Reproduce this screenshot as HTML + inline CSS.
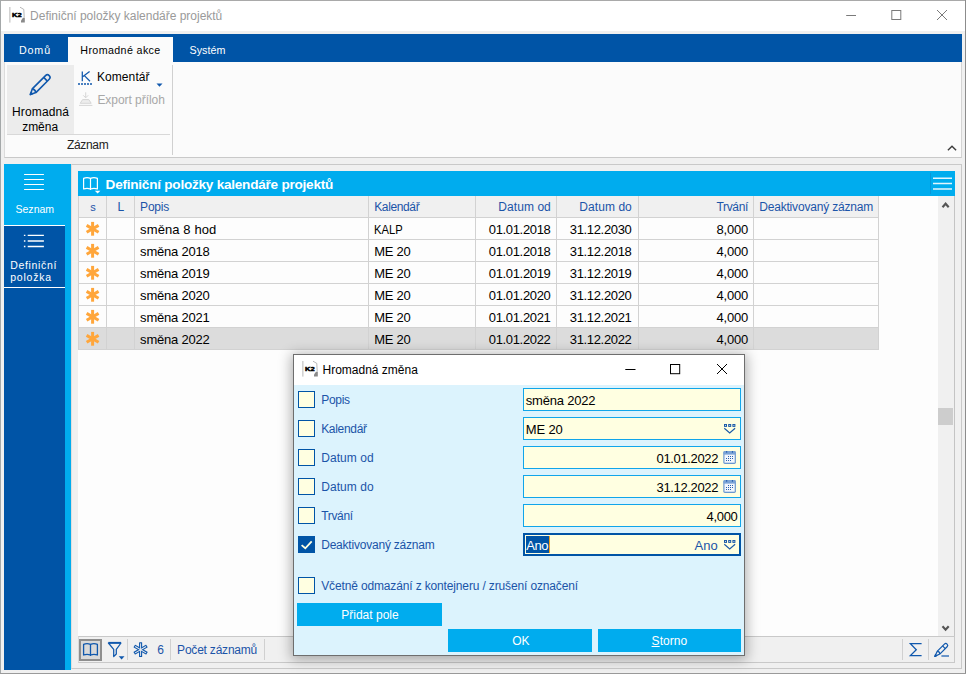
<!DOCTYPE html>
<html><head><meta charset="utf-8"><title>K2</title>
<style>
html,body{margin:0;padding:0}
body{width:966px;height:674px;position:relative;overflow:hidden;background:#f0f0f0;font-family:"Liberation Sans",sans-serif;font-size:12px}
.a{position:absolute}
.t{position:absolute;white-space:pre;line-height:16px;height:16px;font-family:"Liberation Sans",sans-serif}
.cb{position:absolute;width:15px;height:15px;border:1px solid #0054a6;background:#ffffe1;left:298px;z-index:30}
.fld{position:absolute;left:523px;width:216px;height:21px;border:1px solid #10a5ea;background:#ffffe1;z-index:30}
.btn{position:absolute;background:#00acee;z-index:30}
.gl{position:absolute;background:#d2d2d2}
svg{position:absolute;overflow:visible}
</style></head><body>
<!-- window frame -->
<div class="a" style="left:0;top:0;width:966px;height:1px;background:#a9a9a9"></div>
<div class="a" style="left:0;top:0;width:1px;height:674px;background:#a4a8a9"></div>
<div class="a" style="left:965px;top:0;width:1px;height:674px;background:#8c8c8c"></div>
<div class="a" style="left:0;top:673px;width:966px;height:1px;background:#9a9a9a"></div>
<!-- title bar -->
<div class="a" style="left:1px;top:1px;width:964px;height:30px;background:#fff"></div>
<!-- ribbon tabs -->
<div class="a" style="left:4px;top:34px;width:958px;height:28px;background:#0054a6"></div>
<div class="a" style="left:68px;top:37px;width:105px;height:25px;background:#fbfbfb"></div>
<!-- ribbon body -->
<div class="a" style="left:4px;top:62px;width:958px;height:96px;background:#fbfbfb;border-bottom:1px solid #c9c9c9;border-left:1px solid #dcdcdc;border-right:1px solid #d4d4d4;box-sizing:border-box"></div>
<div class="a" style="left:7px;top:65px;width:67px;height:69px;background:#ececec"></div>
<div class="a" style="left:7px;top:134px;width:163px;height:1px;background:#d8d8d8"></div>
<div class="a" style="left:172px;top:65px;width:1px;height:90px;background:#d0d0d0"></div>
<!-- sidebar -->
<div class="a" style="left:4px;top:164px;width:67px;height:506px;background:#00acee"></div>
<div class="a" style="left:4px;top:226px;width:61px;height:444px;background:#0054a6"></div>
<div class="a" style="left:4px;top:225px;width:61px;height:1px;background:#fff"></div>
<div class="a" style="left:4px;top:287px;width:61px;height:1px;background:#fff"></div>
<!-- main panel -->
<div class="a" style="left:71px;top:164px;width:891px;height:505px;border:1px solid #c9c9c9;border-left-color:#dedede;box-sizing:border-box;background:#f0f0f0"></div>
<div class="a" style="left:78px;top:171px;width:877px;height:25px;background:#00acee"></div>
<!-- grid area -->
<div class="a" style="left:78px;top:196px;width:860px;height:440px;background:#fdfdfd"></div>
<div class="a" style="left:938px;top:196px;width:16px;height:440px;background:#f0f0f0"></div>
<div class="a" style="left:938px;top:408px;width:15px;height:17px;background:#cdcdcd"></div>
<div class="a" style="left:954px;top:196px;width:1px;height:467px;background:#c4c4c4"></div>
<!-- column header -->
<div class="a" style="left:78px;top:196px;width:800px;height:21px;background:#f0f0f0"></div>
<!-- selected row -->
<div class="a" style="left:78px;top:328px;width:800px;height:21px;background:#dcdcdc"></div>
<!-- grid lines -->
<div class="gl" style="left:78px;top:217px;width:801px;height:1px"></div>
<div class="gl" style="left:78px;top:239px;width:801px;height:1px"></div>
<div class="gl" style="left:78px;top:261px;width:801px;height:1px"></div>
<div class="gl" style="left:78px;top:283px;width:801px;height:1px"></div>
<div class="gl" style="left:78px;top:305px;width:801px;height:1px"></div>
<div class="gl" style="left:78px;top:327px;width:801px;height:1px"></div>
<div class="gl" style="left:78px;top:349px;width:801px;height:1px"></div>
<div class="gl" style="left:78px;top:196px;width:1px;height:154px"></div>
<div class="gl" style="left:106px;top:196px;width:1px;height:154px"></div>
<div class="gl" style="left:134px;top:196px;width:1px;height:154px"></div>
<div class="gl" style="left:368px;top:196px;width:1px;height:154px"></div>
<div class="gl" style="left:475px;top:196px;width:1px;height:154px"></div>
<div class="gl" style="left:556px;top:196px;width:1px;height:154px"></div>
<div class="gl" style="left:638px;top:196px;width:1px;height:154px"></div>
<div class="gl" style="left:753px;top:196px;width:1px;height:154px"></div>
<div class="gl" style="left:878px;top:196px;width:1px;height:154px"></div>
<!-- status bar -->
<div class="a" style="left:78px;top:636px;width:877px;height:27px;background:#f0f0f0;border-top:1px solid #c9c9c9;border-bottom:1px solid #c9c9c9;border-right:1px solid #c9c9c9;border-left:1px solid #dadada;box-sizing:border-box"></div>
<div class="a" style="left:79px;top:639px;width:23px;height:22px;background:#d9d9d9;border:2px solid #8e8e8e;box-sizing:border-box"></div>
<div class="a" style="left:127px;top:639px;width:1px;height:21px;background:#d0d0d0"></div>
<div class="a" style="left:170px;top:639px;width:1px;height:21px;background:#d0d0d0"></div>
<div class="a" style="left:264px;top:639px;width:1px;height:21px;background:#d0d0d0"></div>
<div class="a" style="left:902px;top:639px;width:1px;height:21px;background:#d0d0d0"></div>
<div class="a" style="left:928px;top:639px;width:1px;height:21px;background:#d0d0d0"></div>
<svg style="left:9.2px;top:7.3px;" width="17" height="16" viewBox="0 0 17 16"><rect x="0" y="0" width="1.6" height="15.6" fill="#d2d2d2"/><text x="3" y="9.9" font-family="Liberation Sans, sans-serif" font-weight="bold" font-size="6.2" fill="#000" stroke="#000" stroke-width="0.5" textLength="9.6" lengthAdjust="spacingAndGlyphs">K2</text><path d="M11,0.2 L14.8,2.4 L15.2,10.5" fill="none" stroke="#9a9a9a" stroke-width="0.7"/><path d="M12,15.6 L12,13.5 L14,10.8 L15.8,10.8 L15.8,15.6 Z" fill="#8a8a8a"/></svg>
<svg style="left:840px;top:5px;" width="120" height="22" viewBox="0 0 120 22"><path d="M6.2,10.5 H16" stroke="#7a7a7a" stroke-width="1" fill="none"/><rect x="51.8" y="5.5" width="9" height="9" stroke="#7a7a7a" stroke-width="1" fill="none"/><path d="M97,5 L107,15 M107,5 L97,15" stroke="#7a7a7a" stroke-width="1" fill="none"/></svg>
<svg style="left:942px;top:140px;" width="20" height="14" viewBox="0 0 20 14"><path d="M5.9,10.3 L10,6.3 L14.1,10.3" stroke="#3c3c3c" stroke-width="1.4" fill="none"/></svg>
<svg style="left:0;top:0;" width="966" height="674"><g transform="translate(30.4,94.4) rotate(-45)" fill="none" stroke="#1058ad" stroke-width="1.6" stroke-linejoin="round"><path d="M0,0 L5.2,-2.6 L24,-2.6 A2.6,2.6 0 0 1 24,2.6 L5.2,2.6 Z"/><path d="M5.2,-2.6 Q7,0 5.2,2.6"/><path d="M21.4,-2.6 L21.4,2.6"/><path d="M0,0 L1.8,-0.8 L1.8,0.8 Z" fill="#1058ad"/></g></svg>
<svg style="left:76px;top:68px;" width="20" height="20" viewBox="0 0 20 20"><path d="M6.3,3.6 V13.3 M6.3,9 L13.6,3.6 M8.4,7.6 L14,13.3" stroke="#1058ad" stroke-width="1.25" fill="none"/><path d="M2,16 H17" stroke="#1058ad" stroke-width="1.3" stroke-dasharray="2 1" fill="none"/></svg>
<svg style="left:155px;top:82px;" width="10" height="6" viewBox="0 0 10 6"><path d="M1.5,1.4 L7.5,1.4 L4.5,4.7 Z" fill="#1058ad"/></svg>
<svg style="left:78px;top:91px;" width="16" height="16" viewBox="0 0 16 16"><path d="M7.7,1.3 V6.6 M5.2,4.3 L7.7,6.8 L10.2,4.3" stroke="#d6d6d6" stroke-width="1" fill="none"/><path d="M2.2,12.3 L4.6,8.6 H10.8 L13.2,12.3 Z" stroke="#d6d6d6" stroke-width="1" fill="#ededed"/><path d="M1,14.4 H14.4" stroke="#d6d6d6" stroke-width="1" fill="none"/></svg>
<svg style="left:20px;top:170px;" width="30" height="24" viewBox="0 0 30 24"><path d="M4.1,4.5 H23.9 M4.1,9.5 H23.9 M4.1,14.5 H23.9 M4.1,19.5 H23.9" stroke="#fff" stroke-width="1.05" fill="none"/></svg>
<svg style="left:20px;top:231px;" width="30" height="20" viewBox="0 0 30 20"><path d="M7.7,4.4 H23.9 M7.7,10 H23.9 M7.7,15.5 H23.9" stroke="#fff" stroke-width="1.3" fill="none"/><path d="M3.9,4.4 H5.4 M3.9,10 H5.4 M3.9,15.5 H5.4" stroke="#fff" stroke-width="1.3" fill="none"/></svg>
<svg style="left:83px;top:177px;" width="16" height="15" viewBox="0 0 16 15"><path d="M0.6,1.4 Q4,-0.2 7.5,1.4 Q11,-0.2 14.4,1.4 V12 Q11,10.6 7.5,12 Q4,10.6 0.6,12 Z M7.5,1.4 V13" stroke="#fff" stroke-width="1.2" fill="none" stroke-linejoin="round"/></svg>
<svg style="left:94px;top:190px;" width="8" height="5" viewBox="0 0 8 5"><path d="M0.8,0.7 H6.4 L3.6,3.6 Z" fill="#fff"/></svg>
<svg style="left:928px;top:172px;" width="28" height="23" viewBox="0 0 28 23"><path d="M2.5,1 V22" stroke="#0a97d8" stroke-width="1"/><path d="M5,6.3 H24 M5,11.6 H24 M5,16.9 H24" stroke="#e4f5fd" stroke-width="1.5" fill="none"/></svg>
<svg style="left:0;top:0" width="966" height="674"><g transform="translate(92.6,228.8)" stroke="#ffa63b" stroke-width="3" fill="none"><path d="M0,-6.9 V6.9"/><path d="M0,-6.9 V6.9" transform="rotate(60)"/><path d="M0,-6.9 V6.9" transform="rotate(120)"/></g><g transform="translate(92.6,250.8)" stroke="#ffa63b" stroke-width="3" fill="none"><path d="M0,-6.9 V6.9"/><path d="M0,-6.9 V6.9" transform="rotate(60)"/><path d="M0,-6.9 V6.9" transform="rotate(120)"/></g><g transform="translate(92.6,272.8)" stroke="#ffa63b" stroke-width="3" fill="none"><path d="M0,-6.9 V6.9"/><path d="M0,-6.9 V6.9" transform="rotate(60)"/><path d="M0,-6.9 V6.9" transform="rotate(120)"/></g><g transform="translate(92.6,294.8)" stroke="#ffa63b" stroke-width="3" fill="none"><path d="M0,-6.9 V6.9"/><path d="M0,-6.9 V6.9" transform="rotate(60)"/><path d="M0,-6.9 V6.9" transform="rotate(120)"/></g><g transform="translate(92.6,316.8)" stroke="#ffa63b" stroke-width="3" fill="none"><path d="M0,-6.9 V6.9"/><path d="M0,-6.9 V6.9" transform="rotate(60)"/><path d="M0,-6.9 V6.9" transform="rotate(120)"/></g><g transform="translate(92.6,338.8)" stroke="#ffa63b" stroke-width="3" fill="none"><path d="M0,-6.9 V6.9"/><path d="M0,-6.9 V6.9" transform="rotate(60)"/><path d="M0,-6.9 V6.9" transform="rotate(120)"/></g></svg>
<svg style="left:0;top:0" width="966" height="674"><path d="M942.5,207.2 L945.6,203.7 L948.7,207.2" stroke="#555" stroke-width="2.1" fill="none"/><path d="M942.5,626.2 L945.6,629.7 L948.7,626.2" stroke="#555" stroke-width="2.1" fill="none"/></svg>
<svg style="left:83px;top:643px;" width="16" height="15" viewBox="0 0 16 15"><path d="M0.6,1.4 Q4,-0.2 7.5,1.4 Q11,-0.2 14.4,1.4 V12 Q11,10.6 7.5,12 Q4,10.6 0.6,12 Z M7.5,1.4 V13" stroke="#1058ad" stroke-width="1.3" fill="none" stroke-linejoin="round"/></svg>
<svg style="left:106px;top:640px;" width="22" height="22" viewBox="0 0 22 22"><path d="M2.4,3 H15 L10.3,9.3 V14 L7.7,16.6 V9.3 Z" stroke="#1058ad" stroke-width="1.25" fill="none" stroke-linejoin="round"/><path d="M2.4,2.7 H15" stroke="#1058ad" stroke-width="1.6" fill="none"/><path d="M12.7,16.2 H18.5 L15.6,19.5 Z" fill="#1058ad"/></svg>
<svg style="left:0;top:0" width="966" height="674"><g transform="translate(140.6,649.65)"><g transform="rotate(0)" fill="#1058ad"><rect x="-1.55" y="-7.3" width="3.1" height="14.6" rx="0.3"/></g><g transform="rotate(60)" fill="#1058ad"><rect x="-1.55" y="-7.3" width="3.1" height="14.6" rx="0.3"/></g><g transform="rotate(120)" fill="#1058ad"><rect x="-1.55" y="-7.3" width="3.1" height="14.6" rx="0.3"/></g><g transform="rotate(0)" fill="#f0f0f0"><rect x="-0.45" y="-6.3" width="0.9" height="12.6"/></g><g transform="rotate(60)" fill="#f0f0f0"><rect x="-0.45" y="-6.3" width="0.9" height="12.6"/></g><g transform="rotate(120)" fill="#f0f0f0"><rect x="-0.45" y="-6.3" width="0.9" height="12.6"/></g></g></svg>
<svg style="left:905px;top:640px;" width="22" height="20" viewBox="0 0 22 20"><path d="M16.6,3.7 H5.4 L11.3,9.7 L5.4,15.6 H16.6" stroke="#1058ad" stroke-width="1.3" fill="none" stroke-linejoin="miter"/></svg>
<svg style="left:0;top:0;" width="966" height="674"><g transform="translate(934.8,656.4) rotate(-45)" fill="none" stroke="#1058ad" stroke-width="1.2" stroke-linejoin="round"><path d="M0,0 L5.2,-1.9 L15.5,-1.9 A1.9,1.9 0 0 1 15.5,1.9 L5.2,1.9 Z"/><path d="M5.2,-1.9 Q7,0 5.2,1.9"/><path d="M12.9,-1.9 L12.9,1.9"/><path d="M0,0 L1.8,-0.8 L1.8,0.8 Z" fill="#1058ad"/></g></svg>
<svg style="left:938px;top:654px;" width="14" height="4" viewBox="0 0 14 4"><path d="M3.4,2 H11" stroke="#1058ad" stroke-width="1.2"/></svg>
<!-- dialog -->
<div class="a" style="left:293px;top:354px;width:452px;height:302px;border:1px solid #6e6e6e;box-sizing:border-box;background:#dcf3fd;box-shadow:0 2px 12px 2px rgba(0,0,0,.30);z-index:20"></div>
<div class="a" style="left:294px;top:355px;width:450px;height:30px;background:#fff;z-index:21"></div>
<div class="cb" style="top:391px"></div>
<div class="cb" style="top:420px"></div>
<div class="cb" style="top:449px"></div>
<div class="cb" style="top:478px"></div>
<div class="cb" style="top:507px"></div>
<div class="cb" style="top:536px;background:#0054a6"></div>
<div class="cb" style="top:577px"></div>
<div class="fld" style="top:388px"></div>
<div class="fld" style="top:417px"></div>
<div class="fld" style="top:446px"></div>
<div class="fld" style="top:475px"></div>
<div class="fld" style="top:504px"></div>
<div class="fld" style="top:533px;border:2px solid #0054a6;width:214px;height:19px"></div>
<div class="a" style="left:525.5px;top:536px;width:24px;height:17px;background:#0054a6;z-index:30"></div>
<div class="a" style="left:549px;top:536px;width:1px;height:17px;background:#f5a11c;z-index:30"></div>
<div class="btn" style="left:297px;top:603px;width:145px;height:23px"></div>
<div class="btn" style="left:448px;top:629px;width:144px;height:23px"></div>
<div class="btn" style="left:598px;top:629px;width:143px;height:23px"></div>
<svg style="left:302.2px;top:361.2px;z-index:30;" width="17" height="16" viewBox="0 0 17 16"><rect x="0" y="0" width="1.6" height="15.6" fill="#d2d2d2"/><text x="3" y="9.9" font-family="Liberation Sans, sans-serif" font-weight="bold" font-size="6.2" fill="#000" stroke="#000" stroke-width="0.5" textLength="9.6" lengthAdjust="spacingAndGlyphs">K2</text><path d="M11,0.2 L14.8,2.4 L15.2,10.5" fill="none" stroke="#9a9a9a" stroke-width="0.7"/><path d="M12,15.6 L12,13.5 L14,10.8 L15.8,10.8 L15.8,15.6 Z" fill="#8a8a8a"/></svg>
<svg style="left:620px;top:358px;z-index:30;" width="120" height="22" viewBox="0 0 120 22"><path d="M5.3,11.5 H15.5" stroke="#000" stroke-width="1" fill="none"/><rect x="50.5" y="6.5" width="9.2" height="9.2" stroke="#000" stroke-width="1" fill="none"/><path d="M97,6 L107,16 M107,6 L97,16" stroke="#000" stroke-width="1" fill="none"/></svg>
<svg style="left:724px;top:424px;z-index:30;" width="13" height="10" viewBox="0 0 13 10"><rect x="0.0" y="0" width="3" height="2.9" fill="#1c5aa6"/><rect x="1.0" y="0.95" width="1" height="1" fill="#c9dcf3"/><rect x="4.2" y="0" width="3" height="2.9" fill="#1c5aa6"/><rect x="5.2" y="0.95" width="1" height="1" fill="#c9dcf3"/><rect x="8.4" y="0" width="3" height="2.9" fill="#1c5aa6"/><rect x="9.4" y="0.95" width="1" height="1" fill="#c9dcf3"/><path d="M0.3,4.2 L5.7,8.9 L11.1,4.2" stroke="#1c5aa6" stroke-width="1.15" fill="none"/></svg>
<svg style="left:724px;top:540px;z-index:30;" width="13" height="10" viewBox="0 0 13 10"><rect x="0.0" y="0" width="3" height="2.9" fill="#1c5aa6"/><rect x="1.0" y="0.95" width="1" height="1" fill="#c9dcf3"/><rect x="4.2" y="0" width="3" height="2.9" fill="#1c5aa6"/><rect x="5.2" y="0.95" width="1" height="1" fill="#c9dcf3"/><rect x="8.4" y="0" width="3" height="2.9" fill="#1c5aa6"/><rect x="9.4" y="0.95" width="1" height="1" fill="#c9dcf3"/><path d="M0.3,4.2 L5.7,8.9 L11.1,4.2" stroke="#1c5aa6" stroke-width="1.15" fill="none"/></svg>
<svg style="left:723px;top:451px;z-index:30;" width="14" height="14" viewBox="0 0 14 14"><rect x="0.3" y="0.1" width="12.6" height="12.8" rx="1.6" fill="#6a97cf"/><rect x="0.3" y="0.1" width="12.6" height="3.6" rx="1.6" fill="#7ba3d6"/><rect x="1.5" y="3.6" width="10.2" height="8.1" fill="#f3f6fc"/><rect x="3.1" y="0" width="1.1" height="1.7" fill="#2a62b0"/><rect x="8.9" y="0" width="1.1" height="1.7" fill="#2a62b0"/><rect x="5" y="5" width="1" height="1" fill="#2a62b0"/><rect x="7" y="5" width="1" height="1" fill="#2a62b0"/><rect x="9" y="5" width="1" height="1" fill="#2a62b0"/><rect x="3" y="7" width="1" height="1" fill="#2a62b0"/><rect x="5" y="7" width="1" height="1" fill="#2a62b0"/><rect x="7" y="7" width="1" height="1" fill="#2a62b0"/><rect x="9" y="7" width="1" height="1" fill="#2a62b0"/><rect x="3" y="9" width="1" height="1" fill="#2a62b0"/><rect x="5" y="9" width="1" height="1" fill="#2a62b0"/><rect x="7" y="9" width="1" height="1" fill="#2a62b0"/></svg>
<svg style="left:723px;top:480px;z-index:30;" width="14" height="14" viewBox="0 0 14 14"><rect x="0.3" y="0.1" width="12.6" height="12.8" rx="1.6" fill="#6a97cf"/><rect x="0.3" y="0.1" width="12.6" height="3.6" rx="1.6" fill="#7ba3d6"/><rect x="1.5" y="3.6" width="10.2" height="8.1" fill="#f3f6fc"/><rect x="3.1" y="0" width="1.1" height="1.7" fill="#2a62b0"/><rect x="8.9" y="0" width="1.1" height="1.7" fill="#2a62b0"/><rect x="5" y="5" width="1" height="1" fill="#2a62b0"/><rect x="7" y="5" width="1" height="1" fill="#2a62b0"/><rect x="9" y="5" width="1" height="1" fill="#2a62b0"/><rect x="3" y="7" width="1" height="1" fill="#2a62b0"/><rect x="5" y="7" width="1" height="1" fill="#2a62b0"/><rect x="7" y="7" width="1" height="1" fill="#2a62b0"/><rect x="9" y="7" width="1" height="1" fill="#2a62b0"/><rect x="3" y="9" width="1" height="1" fill="#2a62b0"/><rect x="5" y="9" width="1" height="1" fill="#2a62b0"/><rect x="7" y="9" width="1" height="1" fill="#2a62b0"/></svg>
<svg style="left:298px;top:536px;z-index:30;" width="17" height="17" viewBox="0 0 17 17"><path d="M3.6,9.1 L7.3,12.3 L13.7,5.3" stroke="#ffffe1" stroke-width="1.8" fill="none"/></svg>
<span class="t" style="left:30.10px;top:8px;font-size:12px;color:#9a9a9a;letter-spacing:-0.017px;">Definiční položky kalendáře projektů</span>
<span class="t" style="left:18.90px;top:42px;font-size:10.7px;color:#fff;letter-spacing:0.895px;">Domů</span>
<span class="t" style="left:80.30px;top:42px;font-size:10.7px;color:#000;letter-spacing:0.379px;">Hromadné akce</span>
<span class="t" style="left:189.60px;top:42px;font-size:10.7px;color:#fff;letter-spacing:0.012px;">Systém</span>
<span class="t" style="left:96.90px;top:69px;font-size:12px;color:#000;letter-spacing:0.096px;">Komentář</span>
<span class="t" style="left:97.40px;top:92px;font-size:12px;color:#a8a8a8;letter-spacing:-0.046px;">Export příloh</span>
<span class="t" style="left:12.00px;top:104px;font-size:12px;color:#000;letter-spacing:0.138px;">Hromadná</span>
<span class="t" style="left:22.20px;top:119px;font-size:12px;color:#000;letter-spacing:-0.033px;">změna</span>
<span class="t" style="left:67.00px;top:137px;font-size:12px;color:#222;letter-spacing:-0.332px;">Záznam</span>
<span class="t" style="left:15.50px;top:201px;font-size:10.5px;color:#fff;letter-spacing:0.014px;">Seznam</span>
<span class="t" style="left:10.20px;top:257px;font-size:10.5px;color:#fff;letter-spacing:0.680px;">Definiční</span>
<span class="t" style="left:10.20px;top:269px;font-size:10.5px;color:#fff;letter-spacing:0.799px;">položka</span>
<span class="t" style="left:105.60px;top:177px;font-size:13.6px;color:#fff;font-weight:bold;letter-spacing:-0.250px;">Definiční položky kalendáře projektů</span>
<span class="t" style="left:90.20px;top:199px;font-size:11px;color:#1b54a8;">s</span>
<span class="t" style="left:117.60px;top:199px;font-size:12px;color:#1b54a8;">L</span>
<span class="t" style="left:140.10px;top:199px;font-size:12px;color:#1b54a8;letter-spacing:-0.208px;">Popis</span>
<span class="t" style="left:374.20px;top:199px;font-size:12px;color:#1b54a8;letter-spacing:-0.364px;">Kalendář</span>
<span class="t" style="left:498.30px;top:199px;font-size:12px;color:#1b54a8;letter-spacing:0.067px;">Datum od</span>
<span class="t" style="left:579.30px;top:199px;font-size:12px;color:#1b54a8;letter-spacing:0.067px;">Datum do</span>
<span class="t" style="left:716.60px;top:199px;font-size:12px;color:#1b54a8;letter-spacing:-0.373px;">Trvání</span>
<span class="t" style="left:759.20px;top:199px;font-size:12px;color:#1b54a8;letter-spacing:-0.183px;">Deaktivovaný záznam</span>
<span class="t" style="left:140.10px;top:222px;font-size:13px;color:#000;letter-spacing:0.103px;">směna 8 hod</span>
<span class="t" style="left:374.20px;top:222px;font-size:13px;color:#000;transform:scaleX(0.8602);transform-origin:0 50%;">KALP</span>
<span class="t" style="left:488.80px;top:222px;font-size:13px;color:#000;letter-spacing:-0.342px;">01.01.2018</span>
<span class="t" style="left:569.80px;top:222px;font-size:13px;color:#000;letter-spacing:-0.342px;">31.12.2030</span>
<span class="t" style="left:716.60px;top:222px;font-size:13px;color:#000;letter-spacing:-0.212px;">8,000</span>
<span class="t" style="left:140.10px;top:244px;font-size:13px;color:#000;letter-spacing:-0.207px;">směna 2018</span>
<span class="t" style="left:374.20px;top:244px;font-size:13px;color:#000;letter-spacing:-0.245px;">ME 20</span>
<span class="t" style="left:488.80px;top:244px;font-size:13px;color:#000;letter-spacing:-0.342px;">01.01.2018</span>
<span class="t" style="left:569.80px;top:244px;font-size:13px;color:#000;letter-spacing:-0.342px;">31.12.2018</span>
<span class="t" style="left:716.60px;top:244px;font-size:13px;color:#000;letter-spacing:-0.212px;">4,000</span>
<span class="t" style="left:140.10px;top:266px;font-size:13px;color:#000;letter-spacing:-0.207px;">směna 2019</span>
<span class="t" style="left:374.20px;top:266px;font-size:13px;color:#000;letter-spacing:-0.245px;">ME 20</span>
<span class="t" style="left:488.80px;top:266px;font-size:13px;color:#000;letter-spacing:-0.342px;">01.01.2019</span>
<span class="t" style="left:569.80px;top:266px;font-size:13px;color:#000;letter-spacing:-0.342px;">31.12.2019</span>
<span class="t" style="left:716.60px;top:266px;font-size:13px;color:#000;letter-spacing:-0.212px;">4,000</span>
<span class="t" style="left:140.10px;top:288px;font-size:13px;color:#000;letter-spacing:-0.207px;">směna 2020</span>
<span class="t" style="left:374.20px;top:288px;font-size:13px;color:#000;letter-spacing:-0.245px;">ME 20</span>
<span class="t" style="left:488.80px;top:288px;font-size:13px;color:#000;letter-spacing:-0.342px;">01.01.2020</span>
<span class="t" style="left:569.80px;top:288px;font-size:13px;color:#000;letter-spacing:-0.342px;">31.12.2020</span>
<span class="t" style="left:716.60px;top:288px;font-size:13px;color:#000;letter-spacing:-0.212px;">4,000</span>
<span class="t" style="left:140.10px;top:310px;font-size:13px;color:#000;letter-spacing:-0.207px;">směna 2021</span>
<span class="t" style="left:374.20px;top:310px;font-size:13px;color:#000;letter-spacing:-0.245px;">ME 20</span>
<span class="t" style="left:488.80px;top:310px;font-size:13px;color:#000;letter-spacing:-0.342px;">01.01.2021</span>
<span class="t" style="left:569.80px;top:310px;font-size:13px;color:#000;letter-spacing:-0.342px;">31.12.2021</span>
<span class="t" style="left:716.60px;top:310px;font-size:13px;color:#000;letter-spacing:-0.212px;">4,000</span>
<span class="t" style="left:140.10px;top:332px;font-size:13px;color:#000;letter-spacing:-0.207px;">směna 2022</span>
<span class="t" style="left:374.20px;top:332px;font-size:13px;color:#000;letter-spacing:-0.245px;">ME 20</span>
<span class="t" style="left:488.80px;top:332px;font-size:13px;color:#000;letter-spacing:-0.342px;">01.01.2022</span>
<span class="t" style="left:569.80px;top:332px;font-size:13px;color:#000;letter-spacing:-0.342px;">31.12.2022</span>
<span class="t" style="left:716.60px;top:332px;font-size:13px;color:#000;letter-spacing:-0.212px;">4,000</span>
<span class="t" style="left:157.20px;top:642px;font-size:12px;color:#1b54a8;">6</span>
<span class="t" style="left:177.10px;top:642px;font-size:12px;color:#1b54a8;letter-spacing:-0.210px;">Počet záznamů</span>
<span class="t" style="left:322.50px;top:362px;font-size:12px;color:#000;z-index:30;">Hromadná změna</span>
<span class="t" style="left:321.20px;top:392px;font-size:12px;color:#1b54a8;letter-spacing:-0.283px;z-index:30;">Popis</span>
<span class="t" style="left:321.20px;top:421px;font-size:12px;color:#1b54a8;letter-spacing:-0.321px;z-index:30;">Kalendář</span>
<span class="t" style="left:321.20px;top:450px;font-size:12px;color:#1b54a8;letter-spacing:0.081px;z-index:30;">Datum od</span>
<span class="t" style="left:321.20px;top:479px;font-size:12px;color:#1b54a8;letter-spacing:0.081px;z-index:30;">Datum do</span>
<span class="t" style="left:321.20px;top:508px;font-size:12px;color:#1b54a8;letter-spacing:-0.333px;z-index:30;">Trvání</span>
<span class="t" style="left:321.20px;top:537px;font-size:12px;color:#1b54a8;letter-spacing:-0.211px;z-index:30;">Deaktivovaný záznam</span>
<span class="t" style="left:321.20px;top:578px;font-size:12px;color:#1b54a8;letter-spacing:-0.143px;z-index:30;">Včetně odmazání z kontejneru / zrušení označení</span>
<span class="t" style="left:525.80px;top:393px;font-size:13px;color:#000;letter-spacing:-0.207px;z-index:30;">směna 2022</span>
<span class="t" style="left:525.80px;top:422px;font-size:13px;color:#000;letter-spacing:-0.170px;z-index:30;">ME 20</span>
<span class="t" style="left:656.60px;top:451px;font-size:13px;color:#000;letter-spacing:-0.364px;z-index:30;">01.01.2022</span>
<span class="t" style="left:656.60px;top:480px;font-size:13px;color:#000;letter-spacing:-0.364px;z-index:30;">31.12.2022</span>
<span class="t" style="left:706.60px;top:509px;font-size:13px;color:#000;letter-spacing:-0.337px;z-index:30;">4,000</span>
<span class="t" style="left:526.30px;top:538px;font-size:13px;color:#fff;letter-spacing:-0.520px;z-index:30;">Ano</span>
<span class="t" style="left:694.60px;top:538px;font-size:13px;color:#1b54a8;letter-spacing:-0.020px;z-index:30;">Ano</span>
<span class="t" style="left:341.20px;top:607px;font-size:12px;color:#fff;letter-spacing:0.012px;z-index:30;">Přidat pole</span>
<span class="t" style="left:512.20px;top:633px;font-size:12px;color:#fff;letter-spacing:0.056px;z-index:30;">OK</span>
<span class="t" style="left:651.60px;top:633px;font-size:12px;color:#fff;letter-spacing:0.065px;z-index:30;"><u>S</u>torno</span>
</body></html>
